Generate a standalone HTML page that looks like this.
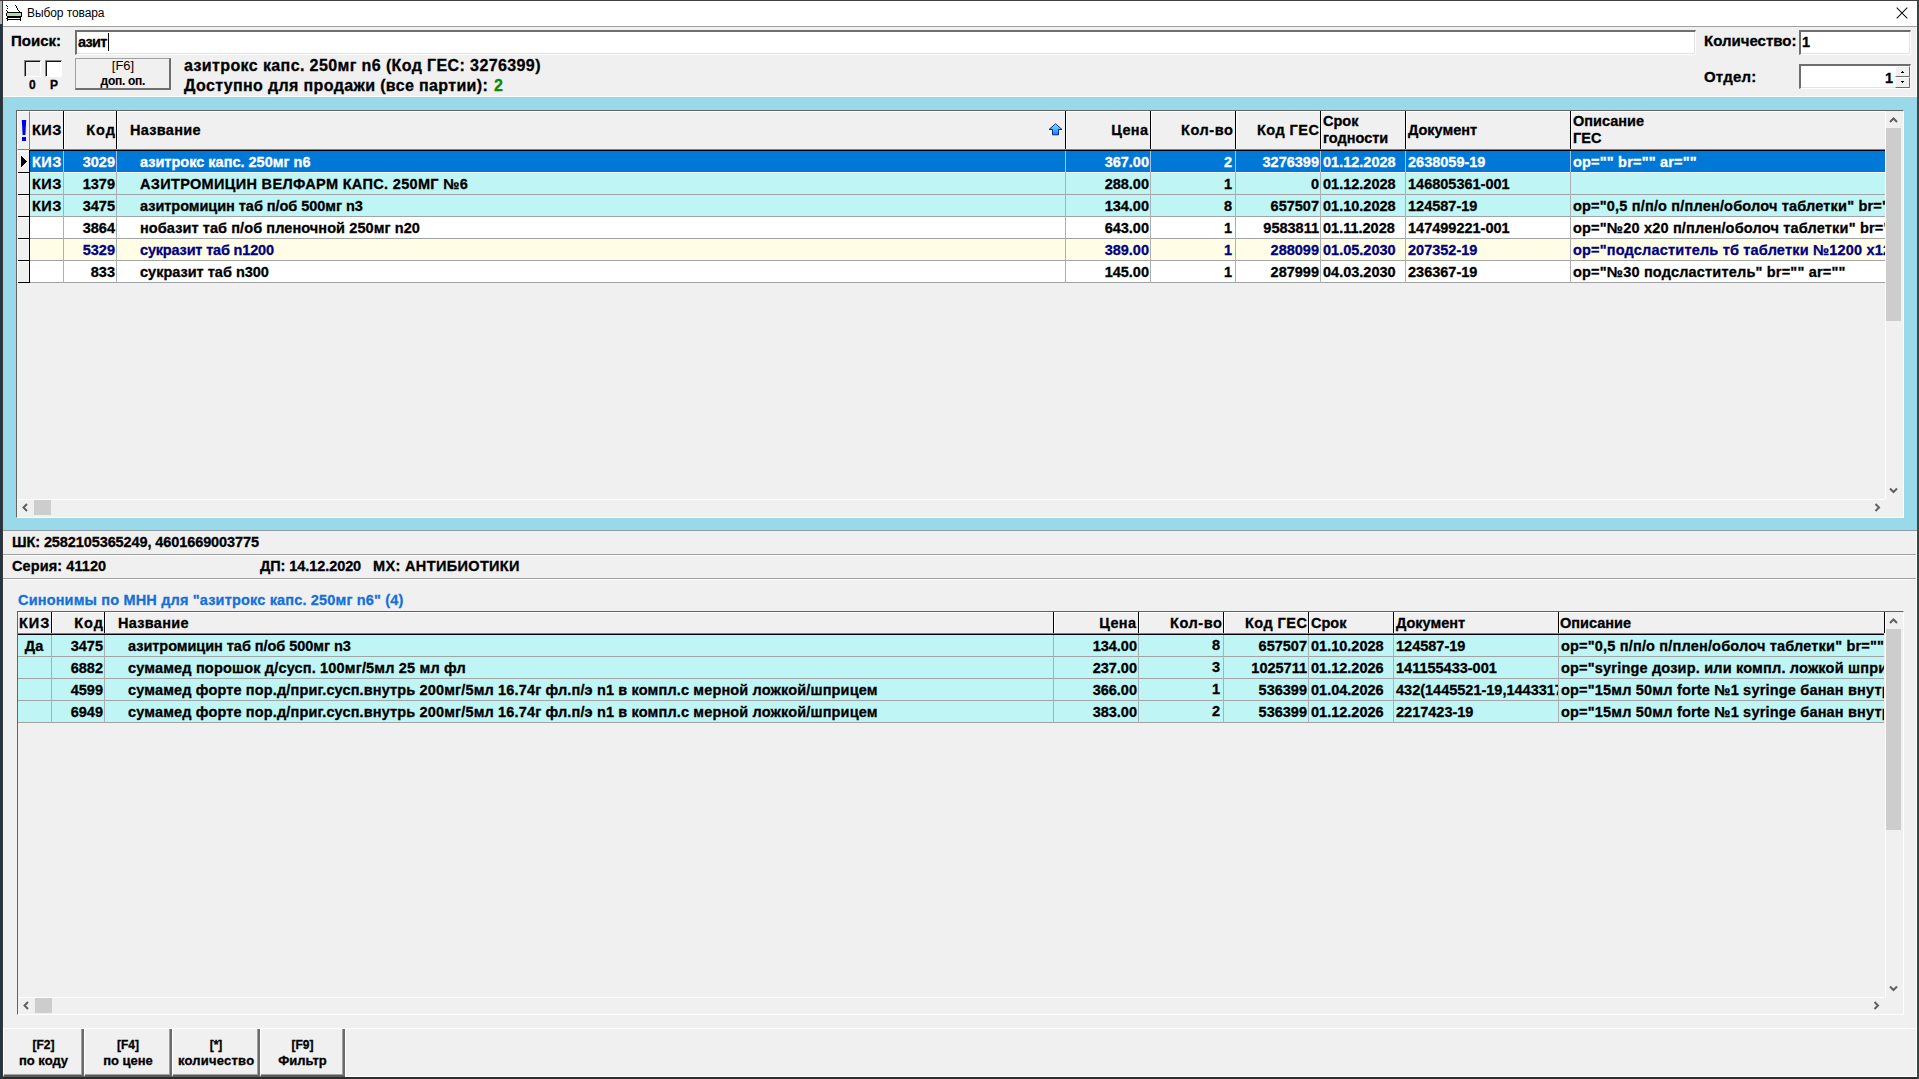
<!DOCTYPE html><html><head><meta charset="utf-8"><style>
*{margin:0;padding:0;box-sizing:border-box}
html,body{width:1919px;height:1079px;overflow:hidden}
body{position:relative;background:#243444;font-family:"Liberation Sans",sans-serif;font-weight:bold}
div{position:absolute}
.t{white-space:pre;-webkit-text-stroke:0.3px currentColor}
.clip{overflow:hidden}
</style></head><body>
<div style="left:0px;top:0px;width:3px;height:24px;background:#b0b0b0;"></div>
<div style="left:0px;top:0px;width:1919px;height:1px;background:#404040;"></div>
<div style="left:2px;top:0px;width:1px;height:1079px;background:#3a3a3a;"></div>
<div style="left:1917px;top:0px;width:2px;height:1079px;background:#3c463f;"></div>
<div style="left:3px;top:1077px;width:1914px;height:2px;background:#2c2c2c;"></div>
<div style="left:3px;top:1px;width:1914px;height:25px;background:#ffffff;"></div>
<div style="left:3px;top:26px;width:1914px;height:1px;background:#a0a0a0;"></div>
<div style="left:3px;top:27px;width:1914px;height:1050px;background:#f0f0f0;"></div>
<div style="left:1916px;top:27px;width:1px;height:1050px;background:#ffffff;"></div>
<div style="left:3px;top:1076px;width:1914px;height:1px;background:#ffffff;"></div>
<svg style="position:absolute;left:5px;top:4px" width="18" height="18" viewBox="0 0 18 18" shape-rendering="crispEdges">
<rect x="2" y="9" width="14" height="3" fill="#c8cec8"/>
<rect x="5" y="10" width="8" height="1" fill="#a8d8a8"/>
<g fill="#000">
<rect x="1" y="1" width="1" height="1"/><rect x="2" y="2" width="1" height="1"/><rect x="2" y="4" width="1" height="1"/><rect x="1" y="6" width="1" height="1"/><rect x="2" y="7" width="1" height="1"/>
<rect x="10" y="1" width="1" height="1"/><rect x="11" y="2" width="1" height="1"/><rect x="11" y="3" width="1" height="1"/><rect x="12" y="4" width="1" height="1"/><rect x="12" y="5" width="1" height="1"/><rect x="13" y="6" width="1" height="1"/><rect x="14" y="7" width="1" height="1"/>
<rect x="2" y="8" width="15" height="1"/><rect x="1" y="9" width="1" height="3"/><rect x="16" y="9" width="1" height="3"/><rect x="2" y="12" width="15" height="1"/>
<rect x="1" y="14" width="2" height="1"/><rect x="3" y="13" width="12" height="1"/><rect x="2" y="13" width="1" height="3"/><rect x="15" y="13" width="1" height="3"/><rect x="3" y="15" width="12" height="1"/><rect x="2" y="16" width="1" height="1"/><rect x="15" y="16" width="1" height="1"/>
</g></svg>
<div class="t" style="top:7px;font-size:12px;line-height:12px;color:#000;font-weight:normal;-webkit-text-stroke:0;letter-spacing:-0.091px;left:27px;">Выбор товара</div>
<svg style="position:absolute;left:1896px;top:7px" width="12" height="12" viewBox="0 0 12 12"><path d="M0.7 0.7L11.3 11.3M11.3 0.7L0.7 11.3" stroke="#111" stroke-width="1.05"/></svg>
<div class="t" style="top:33px;font-size:15px;line-height:15px;color:#000;left:11px;">Поиск:</div>
<div style="left:75px;top:30px;width:1621px;height:25px;background:#fff;border-top:2px solid #6e6e6e;border-left:2px solid #6e6e6e;border-bottom:1px solid #fff;border-right:1px solid #fff;box-shadow:inset -1px -1px 0 #e3e3e3;"></div>
<div class="t" style="top:35px;font-size:14.5px;line-height:14.5px;color:#000;letter-spacing:-0.667px;left:78px;">азит</div>
<div style="left:108px;top:33px;width:1px;height:18px;background:#000;"></div>
<div class="t" style="top:33px;font-size:15px;line-height:15px;color:#000;left:1704px;">Количество:</div>
<div style="left:1799px;top:30px;width:112px;height:25px;background:#fff;border-top:2px solid #6e6e6e;border-left:2px solid #6e6e6e;border-bottom:1px solid #fff;border-right:1px solid #fff;box-shadow:inset -1px -1px 0 #e3e3e3;"></div>
<div class="t" style="top:35px;font-size:14.5px;line-height:14.5px;color:#000;left:1802px;">1</div>
<div class="t" style="top:69px;font-size:15px;line-height:15px;color:#000;letter-spacing:0.2px;left:1704px;">Отдел:</div>
<div style="left:1799px;top:64px;width:112px;height:25px;background:#fff;border-top:2px solid #6e6e6e;border-left:2px solid #6e6e6e;border-bottom:1px solid #fff;border-right:1px solid #fff;box-shadow:inset -1px -1px 0 #e3e3e3;"></div>
<div class="t" style="top:71px;font-size:14.5px;line-height:14.5px;color:#000;left:1293.000px;width:600px;text-align:right;">1</div>
<div style="left:1895px;top:66px;width:15px;height:11px;background:#f0f0f0;border-top:1px solid #fff;border-left:1px solid #fff;border-bottom:1px solid #6e6e6e;border-right:1px solid #6e6e6e;"></div>
<div style="left:1895px;top:77px;width:15px;height:11px;background:#f0f0f0;border-top:1px solid #fff;border-left:1px solid #fff;border-bottom:1px solid #6e6e6e;border-right:1px solid #6e6e6e;"></div>
<svg style="position:absolute;left:1899px;top:69px" width="7" height="16" shape-rendering="crispEdges"><rect x="3" y="2" width="1" height="1" fill="#000"/><rect x="2" y="3" width="3" height="1" fill="#000"/><rect x="2" y="12" width="3" height="1" fill="#000"/><rect x="3" y="13" width="1" height="1" fill="#000"/></svg>
<div style="left:24px;top:60px;width:17px;height:17px;background:#f0f0f0;border-top:1px solid #8a8a8a;border-left:1px solid #8a8a8a;border-bottom:1px solid #fff;border-right:1px solid #fff;box-shadow:inset 1px 1px 0 #141414;"></div>
<div style="left:45px;top:60px;width:17px;height:17px;background:#ffffff;border-top:1px solid #8a8a8a;border-left:1px solid #8a8a8a;border-bottom:1px solid #fff;border-right:1px solid #fff;box-shadow:inset 1px 1px 0 #141414;"></div>
<div class="t" style="top:79px;font-size:12px;line-height:12px;color:#000;left:29px;">0</div>
<div class="t" style="top:79px;font-size:12px;line-height:12px;color:#000;left:50px;">P</div>
<div style="left:75px;top:58px;width:96px;height:32px;background:#f0f0f0;border-top:1px solid #a0a0a0;border-left:1px solid #a0a0a0;border-bottom:2px solid #6e6e6e;border-right:2px solid #6e6e6e;"></div>
<div class="t" style="top:59px;font-size:13px;line-height:13px;color:#000;font-weight:normal;-webkit-text-stroke:0;left:-177.000px;width:600px;text-align:center;">[F6]</div>
<div class="t" style="top:75px;font-size:12px;line-height:12px;color:#000;letter-spacing:-0.286px;left:-177.143px;width:600px;text-align:center;-webkit-text-stroke:0.1px currentColor;">доп. оп.</div>
<div class="t" style="top:58px;font-size:16px;line-height:16px;color:#000;letter-spacing:0.39px;left:184px;">азитрокс капс. 250мг n6 (Код ГЕС: 3276399)</div>
<div class="t" style="top:78px;font-size:16px;line-height:16px;color:#000;letter-spacing:0.364px;left:184px;">Доступно для продажи (все партии):</div>
<div class="t" style="top:78px;font-size:16px;line-height:16px;color:#0a8a0a;left:494px;">2</div>
<div style="left:3px;top:96px;width:1914px;height:1px;background:#ffffff;"></div>
<div style="left:3px;top:97px;width:1914px;height:433px;background:#99d9ea;"></div>
<div style="left:3px;top:530px;width:1914px;height:1px;background:#8c9ca0;"></div>
<div style="left:16px;top:110px;width:1888px;height:408px;background:#f0f0f0;border-top:1px solid #646464;border-left:1px solid #646464;border-bottom:1px solid #fff;border-right:1px solid #fff;"></div>
<div style="left:17px;top:111px;width:1868px;height:39px;background:#f0f0f0;"></div>
<div style="left:17px;top:111px;width:1868px;height:1px;background:#ffffff;"></div>
<div style="left:30px;top:149px;width:1855px;height:1px;background:#808080;"></div>
<div style="left:30px;top:150px;width:1855px;height:1px;background:#00000c;"></div>
<div style="left:30px;top:151px;width:1855px;height:21px;background:#0078d7;"></div>
<div style="left:30px;top:172px;width:1855px;height:1px;background:#f4f8fc;"></div>
<div style="left:30px;top:173px;width:1855px;height:21px;background:#bff5f5;"></div>
<div style="left:30px;top:194px;width:1855px;height:1px;background:#a0a4a4;"></div>
<div style="left:30px;top:195px;width:1855px;height:21px;background:#bff5f5;"></div>
<div style="left:30px;top:216px;width:1855px;height:1px;background:#a0a4a4;"></div>
<div style="left:30px;top:217px;width:1855px;height:21px;background:#ffffff;"></div>
<div style="left:30px;top:238px;width:1855px;height:1px;background:#a0a4a4;"></div>
<div style="left:30px;top:239px;width:1855px;height:21px;background:#fffde6;"></div>
<div style="left:30px;top:260px;width:1855px;height:1px;background:#a0a4a4;"></div>
<div style="left:30px;top:261px;width:1855px;height:21px;background:#ffffff;"></div>
<div style="left:30px;top:282px;width:1855px;height:1px;background:#a0a4a4;"></div>
<div style="left:63px;top:151px;width:1px;height:132px;background:#acb0b0;"></div>
<div style="left:116px;top:151px;width:1px;height:132px;background:#acb0b0;"></div>
<div style="left:1065px;top:151px;width:1px;height:132px;background:#acb0b0;"></div>
<div style="left:1150px;top:151px;width:1px;height:132px;background:#acb0b0;"></div>
<div style="left:1235px;top:151px;width:1px;height:132px;background:#acb0b0;"></div>
<div style="left:1320px;top:151px;width:1px;height:132px;background:#acb0b0;"></div>
<div style="left:1405px;top:151px;width:1px;height:132px;background:#acb0b0;"></div>
<div style="left:1570px;top:151px;width:1px;height:132px;background:#acb0b0;"></div>
<div style="left:63px;top:151px;width:1px;height:21px;background:#9cc8f0;"></div>
<div style="left:116px;top:151px;width:1px;height:21px;background:#9cc8f0;"></div>
<div style="left:1065px;top:151px;width:1px;height:21px;background:#9cc8f0;"></div>
<div style="left:1150px;top:151px;width:1px;height:21px;background:#9cc8f0;"></div>
<div style="left:1235px;top:151px;width:1px;height:21px;background:#9cc8f0;"></div>
<div style="left:1320px;top:151px;width:1px;height:21px;background:#9cc8f0;"></div>
<div style="left:1405px;top:151px;width:1px;height:21px;background:#9cc8f0;"></div>
<div style="left:1570px;top:151px;width:1px;height:21px;background:#9cc8f0;"></div>
<div style="left:63px;top:111px;width:1px;height:38px;background:#000000;"></div>
<div style="left:116px;top:111px;width:1px;height:38px;background:#000000;"></div>
<div style="left:1065px;top:111px;width:1px;height:38px;background:#000000;"></div>
<div style="left:1150px;top:111px;width:1px;height:38px;background:#000000;"></div>
<div style="left:1235px;top:111px;width:1px;height:38px;background:#000000;"></div>
<div style="left:1320px;top:111px;width:1px;height:38px;background:#000000;"></div>
<div style="left:1405px;top:111px;width:1px;height:38px;background:#000000;"></div>
<div style="left:1570px;top:111px;width:1px;height:38px;background:#000000;"></div>
<div style="left:1885px;top:111px;width:1px;height:38px;background:#000000;"></div>
<div style="left:64px;top:112px;width:1px;height:37px;background:#ffffff;"></div>
<div style="left:117px;top:112px;width:1px;height:37px;background:#ffffff;"></div>
<div style="left:1066px;top:112px;width:1px;height:37px;background:#ffffff;"></div>
<div style="left:1151px;top:112px;width:1px;height:37px;background:#ffffff;"></div>
<div style="left:1236px;top:112px;width:1px;height:37px;background:#ffffff;"></div>
<div style="left:1321px;top:112px;width:1px;height:37px;background:#ffffff;"></div>
<div style="left:1406px;top:112px;width:1px;height:37px;background:#ffffff;"></div>
<div style="left:1571px;top:112px;width:1px;height:37px;background:#ffffff;"></div>
<div style="left:17px;top:111px;width:13px;height:39px;background:#f0f0f0;border-top:1px solid #fff;border-left:1px solid #fff;border-right:1px solid #808080;border-bottom:1px solid #808080;"></div>
<div style="left:29px;top:150px;width:1px;height:133px;background:#000;"></div>
<div style="left:17px;top:151px;width:12px;height:21px;background:#f0f0f0;border-top:1px solid #fff;border-left:1px solid #fff;"></div>
<div style="left:18px;top:172px;width:12px;height:1px;background:#000;"></div>
<div style="left:17px;top:173px;width:12px;height:21px;background:#f0f0f0;border-top:1px solid #fff;border-left:1px solid #fff;"></div>
<div style="left:18px;top:194px;width:12px;height:1px;background:#000;"></div>
<div style="left:17px;top:195px;width:12px;height:21px;background:#f0f0f0;border-top:1px solid #fff;border-left:1px solid #fff;"></div>
<div style="left:18px;top:216px;width:12px;height:1px;background:#000;"></div>
<div style="left:17px;top:217px;width:12px;height:21px;background:#f0f0f0;border-top:1px solid #fff;border-left:1px solid #fff;"></div>
<div style="left:18px;top:238px;width:12px;height:1px;background:#000;"></div>
<div style="left:17px;top:239px;width:12px;height:21px;background:#f0f0f0;border-top:1px solid #fff;border-left:1px solid #fff;"></div>
<div style="left:18px;top:260px;width:12px;height:1px;background:#000;"></div>
<div style="left:17px;top:261px;width:12px;height:21px;background:#f0f0f0;border-top:1px solid #fff;border-left:1px solid #fff;"></div>
<div style="left:18px;top:282px;width:12px;height:1px;background:#000;"></div>
<div class="t" style="top:123px;font-size:14.5px;line-height:14.5px;color:#000;letter-spacing:0.5px;left:32px;">КИЗ</div>
<div class="t" style="top:123px;font-size:14.5px;line-height:14.5px;color:#000;letter-spacing:1.0px;left:-484.000px;width:600px;text-align:right;">Код</div>
<div class="t" style="top:123px;font-size:14.5px;line-height:14.5px;color:#000;letter-spacing:0.286px;left:130px;">Название</div>
<div class="t" style="top:123px;font-size:14.5px;line-height:14.5px;color:#000;letter-spacing:0.333px;left:548.333px;width:600px;text-align:right;">Цена</div>
<div class="t" style="top:123px;font-size:14.5px;line-height:14.5px;color:#000;letter-spacing:0.6px;left:633.600px;width:600px;text-align:right;">Кол-во</div>
<div class="t" style="top:123px;font-size:14.5px;line-height:14.5px;color:#000;letter-spacing:0.5px;left:719.500px;width:600px;text-align:right;">Код ГЕС</div>
<div class="t" style="top:114px;font-size:14.5px;line-height:14.5px;color:#000;left:1323px;">Срок</div>
<div class="t" style="top:131px;font-size:14.5px;line-height:14.5px;color:#000;left:1323px;">годности</div>
<div class="t" style="top:123px;font-size:14.5px;line-height:14.5px;color:#000;left:1408px;">Документ</div>
<div class="t" style="top:114px;font-size:14.5px;line-height:14.5px;color:#000;left:1573px;">Описание</div>
<div class="t" style="top:131px;font-size:14.5px;line-height:14.5px;color:#000;left:1573px;">ГЕС</div>
<svg style="position:absolute;left:21px;top:119px" width="6" height="23" shape-rendering="geometricPrecision"><path d="M0.8 1H5.2L4.4 16H1.6z" fill="#0000e6"/><rect x="1" y="18" width="4" height="4" fill="#0000e6"/></svg>
<svg style="position:absolute;left:1048px;top:123px" width="15" height="13" viewBox="0 0 15 13"><defs><linearGradient id="ga" x1="0" y1="0" x2="0" y2="1"><stop offset="0" stop-color="#8fe8ff"/><stop offset="1" stop-color="#0a7ef0"/></linearGradient></defs><path d="M7.5 0.8L14 6.5H10.5V11.8H4.5V6.5H1z" fill="url(#ga)" stroke="#0a2a8a" stroke-width="1"/></svg>
<div class="t" style="top:155px;font-size:14.5px;line-height:14.5px;color:#ffffff;letter-spacing:0.5px;left:32px;">КИЗ</div>
<div class="t" style="top:155px;font-size:14.5px;line-height:14.5px;color:#ffffff;left:-485.000px;width:600px;text-align:right;">3029</div>
<div class="t" style="top:155px;font-size:14.5px;line-height:14.5px;color:#ffffff;left:140px;">азитрокс капс. 250мг n6</div>
<div class="t" style="top:155px;font-size:14.5px;line-height:14.5px;color:#ffffff;left:549.000px;width:600px;text-align:right;">367.00</div>
<div class="t" style="top:155px;font-size:14.5px;line-height:14.5px;color:#ffffff;left:632.000px;width:600px;text-align:right;">2</div>
<div class="t" style="top:155px;font-size:14.5px;line-height:14.5px;color:#ffffff;left:719.000px;width:600px;text-align:right;">3276399</div>
<div class="t" style="top:155px;font-size:14.5px;line-height:14.5px;color:#ffffff;left:1323px;">01.12.2028</div>
<div class="t" style="top:155px;font-size:14.5px;line-height:14.5px;color:#ffffff;left:1408px;">2638059-19</div>
<div class="clip" style="left:1571px;top:151px;width:314px;height:21px">
<div class="t" style="top:4px;font-size:14.5px;line-height:14.5px;color:#ffffff;letter-spacing:0.19px;left:2px;">op="" br="" ar=""</div>
</div>
<div class="t" style="top:177px;font-size:14.5px;line-height:14.5px;color:#000000;letter-spacing:0.5px;left:32px;">КИЗ</div>
<div class="t" style="top:177px;font-size:14.5px;line-height:14.5px;color:#000000;left:-485.000px;width:600px;text-align:right;">1379</div>
<div class="t" style="top:177px;font-size:14.5px;line-height:14.5px;color:#000000;letter-spacing:0.333px;left:140px;">АЗИТРОМИЦИН ВЕЛФАРМ КАПС. 250МГ №6</div>
<div class="t" style="top:177px;font-size:14.5px;line-height:14.5px;color:#000000;left:549.000px;width:600px;text-align:right;">288.00</div>
<div class="t" style="top:177px;font-size:14.5px;line-height:14.5px;color:#000000;left:632.000px;width:600px;text-align:right;">1</div>
<div class="t" style="top:177px;font-size:14.5px;line-height:14.5px;color:#000000;left:719.000px;width:600px;text-align:right;">0</div>
<div class="t" style="top:177px;font-size:14.5px;line-height:14.5px;color:#000000;left:1323px;">01.12.2028</div>
<div class="t" style="top:177px;font-size:14.5px;line-height:14.5px;color:#000000;left:1408px;">146805361-001</div>
<div class="t" style="top:199px;font-size:14.5px;line-height:14.5px;color:#000000;letter-spacing:0.5px;left:32px;">КИЗ</div>
<div class="t" style="top:199px;font-size:14.5px;line-height:14.5px;color:#000000;left:-485.000px;width:600px;text-align:right;">3475</div>
<div class="t" style="top:199px;font-size:14.5px;line-height:14.5px;color:#000000;letter-spacing:-0.036px;left:140px;">азитромицин таб п/об 500мг n3</div>
<div class="t" style="top:199px;font-size:14.5px;line-height:14.5px;color:#000000;left:549.000px;width:600px;text-align:right;">134.00</div>
<div class="t" style="top:199px;font-size:14.5px;line-height:14.5px;color:#000000;left:632.000px;width:600px;text-align:right;">8</div>
<div class="t" style="top:199px;font-size:14.5px;line-height:14.5px;color:#000000;left:719.000px;width:600px;text-align:right;">657507</div>
<div class="t" style="top:199px;font-size:14.5px;line-height:14.5px;color:#000000;left:1323px;">01.10.2028</div>
<div class="t" style="top:199px;font-size:14.5px;line-height:14.5px;color:#000000;left:1408px;">124587-19</div>
<div class="clip" style="left:1571px;top:195px;width:314px;height:21px">
<div class="t" style="top:4px;font-size:14.5px;line-height:14.5px;color:#000000;letter-spacing:0.19px;left:2px;">op="0,5 п/п/о п/плен/оболоч таблетки" br=""</div>
</div>
<div class="t" style="top:221px;font-size:14.5px;line-height:14.5px;color:#000000;left:-485.000px;width:600px;text-align:right;">3864</div>
<div class="t" style="top:221px;font-size:14.5px;line-height:14.5px;color:#000000;letter-spacing:0.086px;left:140px;">нобазит таб п/об пленочной 250мг n20</div>
<div class="t" style="top:221px;font-size:14.5px;line-height:14.5px;color:#000000;left:549.000px;width:600px;text-align:right;">643.00</div>
<div class="t" style="top:221px;font-size:14.5px;line-height:14.5px;color:#000000;left:632.000px;width:600px;text-align:right;">1</div>
<div class="t" style="top:221px;font-size:14.5px;line-height:14.5px;color:#000000;left:719.000px;width:600px;text-align:right;">9583811</div>
<div class="t" style="top:221px;font-size:14.5px;line-height:14.5px;color:#000000;left:1323px;">01.11.2028</div>
<div class="t" style="top:221px;font-size:14.5px;line-height:14.5px;color:#000000;left:1408px;">147499221-001</div>
<div class="clip" style="left:1571px;top:217px;width:314px;height:21px">
<div class="t" style="top:4px;font-size:14.5px;line-height:14.5px;color:#000000;letter-spacing:0.19px;left:2px;">op="№20 x20 п/плен/оболоч таблетки" br=""</div>
</div>
<div class="t" style="top:243px;font-size:14.5px;line-height:14.5px;color:#000080;left:-485.000px;width:600px;text-align:right;">5329</div>
<div class="t" style="top:243px;font-size:14.5px;line-height:14.5px;color:#000080;letter-spacing:-0.176px;left:140px;">сукразит таб n1200</div>
<div class="t" style="top:243px;font-size:14.5px;line-height:14.5px;color:#000080;left:549.000px;width:600px;text-align:right;">389.00</div>
<div class="t" style="top:243px;font-size:14.5px;line-height:14.5px;color:#000080;left:632.000px;width:600px;text-align:right;">1</div>
<div class="t" style="top:243px;font-size:14.5px;line-height:14.5px;color:#000080;left:719.000px;width:600px;text-align:right;">288099</div>
<div class="t" style="top:243px;font-size:14.5px;line-height:14.5px;color:#000080;left:1323px;">01.05.2030</div>
<div class="t" style="top:243px;font-size:14.5px;line-height:14.5px;color:#000080;left:1408px;">207352-19</div>
<div class="clip" style="left:1571px;top:239px;width:314px;height:21px">
<div class="t" style="top:4px;font-size:14.5px;line-height:14.5px;color:#000080;letter-spacing:0.19px;left:2px;">op="подсластитель тб таблетки №1200 x1200"</div>
</div>
<div class="t" style="top:265px;font-size:14.5px;line-height:14.5px;color:#000000;left:-485.000px;width:600px;text-align:right;">833</div>
<div class="t" style="top:265px;font-size:14.5px;line-height:14.5px;color:#000000;left:140px;">сукразит таб n300</div>
<div class="t" style="top:265px;font-size:14.5px;line-height:14.5px;color:#000000;left:549.000px;width:600px;text-align:right;">145.00</div>
<div class="t" style="top:265px;font-size:14.5px;line-height:14.5px;color:#000000;left:632.000px;width:600px;text-align:right;">1</div>
<div class="t" style="top:265px;font-size:14.5px;line-height:14.5px;color:#000000;left:719.000px;width:600px;text-align:right;">287999</div>
<div class="t" style="top:265px;font-size:14.5px;line-height:14.5px;color:#000000;left:1323px;">04.03.2030</div>
<div class="t" style="top:265px;font-size:14.5px;line-height:14.5px;color:#000000;left:1408px;">236367-19</div>
<div class="clip" style="left:1571px;top:261px;width:314px;height:21px">
<div class="t" style="top:4px;font-size:14.5px;line-height:14.5px;color:#000000;letter-spacing:0.19px;left:2px;">op="№30 подсластитель" br="" ar=""</div>
</div>
<svg style="position:absolute;left:20px;top:155px" width="8" height="13" shape-rendering="crispEdges"><path d="M1 0.5L7 6.5L1 12.5z" fill="#000"/></svg>
<div style="left:1885px;top:111px;width:1px;height:388px;background:#ffffff;"></div>
<div style="left:1886px;top:111px;width:16px;height:388px;background:#f0f0f0;"></div>
<div style="left:1886px;top:128px;width:15px;height:193px;background:#cdcdcd;"></div>
<svg style="position:absolute;left:1889px;top:116px" width="9" height="8"><path d="M1 6L4.5 2.5L8 6" fill="none" stroke="#606060" stroke-width="2"/></svg>
<svg style="position:absolute;left:1889px;top:487px" width="9" height="8"><path d="M1 1.5L4.5 5L8 1.5" fill="none" stroke="#606060" stroke-width="2"/></svg>
<div style="left:17px;top:499px;width:1868px;height:1px;background:#ffffff;"></div>
<div style="left:17px;top:500px;width:1868px;height:16px;background:#f0f0f0;"></div>
<div style="left:34px;top:500px;width:17px;height:15px;background:#cdcdcd;"></div>
<svg style="position:absolute;left:21px;top:503px" width="8" height="9"><path d="M6 1L2.5 4.5L6 8" fill="none" stroke="#606060" stroke-width="2"/></svg>
<svg style="position:absolute;left:1874px;top:503px" width="8" height="9"><path d="M1.5 1L5 4.5L1.5 8" fill="none" stroke="#606060" stroke-width="2"/></svg>
<div style="left:1885px;top:499px;width:17px;height:17px;background:#f0f0f0;"></div>
<div class="t" style="top:535px;font-size:14.5px;line-height:14.5px;color:#000;letter-spacing:-0.097px;left:12px;">ШК: 2582105365249, 4601669003775</div>
<div style="left:3px;top:554px;width:1913px;height:1px;background:#a0a0a0;"></div>
<div style="left:3px;top:555px;width:1913px;height:1px;background:#ffffff;"></div>
<div class="t" style="top:559px;font-size:14.5px;line-height:14.5px;color:#000;letter-spacing:0.091px;left:12px;">Серия: 41120</div>
<div class="t" style="top:559px;font-size:14.5px;line-height:14.5px;color:#000;letter-spacing:-0.077px;left:260px;">ДП: 14.12.2020</div>
<div class="t" style="top:559px;font-size:14.5px;line-height:14.5px;color:#000;letter-spacing:0.357px;left:373px;">МХ: АНТИБИОТИКИ</div>
<div style="left:3px;top:578px;width:1913px;height:1px;background:#a0a0a0;"></div>
<div style="left:3px;top:579px;width:1913px;height:1px;background:#ffffff;"></div>
<div class="t" style="top:593px;font-size:14.5px;line-height:14.5px;color:#1670d8;letter-spacing:0.167px;left:18px;">Синонимы по МНН для "азитрокс капс. 250мг n6" (4)</div>
<div style="left:17px;top:611px;width:1887px;height:404px;background:#f0f0f0;border-top:1px solid #646464;border-left:1px solid #646464;border-bottom:1px solid #fff;border-right:1px solid #fff;"></div>
<div style="left:18px;top:612px;width:1866px;height:22px;background:#f0f0f0;"></div>
<div style="left:18px;top:612px;width:1866px;height:1px;background:#ffffff;"></div>
<div style="left:18px;top:633px;width:1866px;height:1px;background:#808080;"></div>
<div style="left:18px;top:634px;width:1866px;height:1px;background:#00000c;"></div>
<div style="left:18px;top:635px;width:1866px;height:21px;background:#bff5f5;"></div>
<div style="left:18px;top:656px;width:1866px;height:1px;background:#a0a4a4;"></div>
<div style="left:18px;top:657px;width:1866px;height:21px;background:#bff5f5;"></div>
<div style="left:18px;top:678px;width:1866px;height:1px;background:#a0a4a4;"></div>
<div style="left:18px;top:679px;width:1866px;height:21px;background:#bff5f5;"></div>
<div style="left:18px;top:700px;width:1866px;height:1px;background:#a0a4a4;"></div>
<div style="left:18px;top:701px;width:1866px;height:21px;background:#bff5f5;"></div>
<div style="left:18px;top:722px;width:1866px;height:1px;background:#a0a4a4;"></div>
<div style="left:51px;top:635px;width:1px;height:88px;background:#acb0b0;"></div>
<div style="left:104px;top:635px;width:1px;height:88px;background:#acb0b0;"></div>
<div style="left:1053px;top:635px;width:1px;height:88px;background:#acb0b0;"></div>
<div style="left:1138px;top:635px;width:1px;height:88px;background:#acb0b0;"></div>
<div style="left:1223px;top:635px;width:1px;height:88px;background:#acb0b0;"></div>
<div style="left:1308px;top:635px;width:1px;height:88px;background:#acb0b0;"></div>
<div style="left:1393px;top:635px;width:1px;height:88px;background:#acb0b0;"></div>
<div style="left:1558px;top:635px;width:1px;height:88px;background:#acb0b0;"></div>
<div style="left:51px;top:612px;width:1px;height:21px;background:#000000;"></div>
<div style="left:104px;top:612px;width:1px;height:21px;background:#000000;"></div>
<div style="left:1053px;top:612px;width:1px;height:21px;background:#000000;"></div>
<div style="left:1138px;top:612px;width:1px;height:21px;background:#000000;"></div>
<div style="left:1223px;top:612px;width:1px;height:21px;background:#000000;"></div>
<div style="left:1308px;top:612px;width:1px;height:21px;background:#000000;"></div>
<div style="left:1393px;top:612px;width:1px;height:21px;background:#000000;"></div>
<div style="left:1558px;top:612px;width:1px;height:21px;background:#000000;"></div>
<div style="left:1884px;top:612px;width:1px;height:21px;background:#000000;"></div>
<div style="left:52px;top:613px;width:1px;height:20px;background:#ffffff;"></div>
<div style="left:105px;top:613px;width:1px;height:20px;background:#ffffff;"></div>
<div style="left:1054px;top:613px;width:1px;height:20px;background:#ffffff;"></div>
<div style="left:1139px;top:613px;width:1px;height:20px;background:#ffffff;"></div>
<div style="left:1224px;top:613px;width:1px;height:20px;background:#ffffff;"></div>
<div style="left:1309px;top:613px;width:1px;height:20px;background:#ffffff;"></div>
<div style="left:1394px;top:613px;width:1px;height:20px;background:#ffffff;"></div>
<div style="left:1559px;top:613px;width:1px;height:20px;background:#ffffff;"></div>
<div class="t" style="top:616px;font-size:14.5px;line-height:14.5px;color:#000;letter-spacing:1.0px;left:19px;">КИЗ</div>
<div class="t" style="top:616px;font-size:14.5px;line-height:14.5px;color:#000;letter-spacing:1.0px;left:-496.000px;width:600px;text-align:right;">Код</div>
<div class="t" style="top:616px;font-size:14.5px;line-height:14.5px;color:#000;letter-spacing:0.286px;left:118px;">Название</div>
<div class="t" style="top:616px;font-size:14.5px;line-height:14.5px;color:#000;letter-spacing:0.333px;left:536.333px;width:600px;text-align:right;">Цена</div>
<div class="t" style="top:616px;font-size:14.5px;line-height:14.5px;color:#000;letter-spacing:0.6px;left:622.600px;width:600px;text-align:right;">Кол-во</div>
<div class="t" style="top:616px;font-size:14.5px;line-height:14.5px;color:#000;letter-spacing:0.5px;left:707.500px;width:600px;text-align:right;">Код ГЕС</div>
<div class="t" style="top:616px;font-size:14.5px;line-height:14.5px;color:#000;left:1311px;">Срок</div>
<div class="t" style="top:616px;font-size:14.5px;line-height:14.5px;color:#000;left:1396px;">Документ</div>
<div class="t" style="top:616px;font-size:14.5px;line-height:14.5px;color:#000;left:1560px;">Описание</div>
<div class="t" style="top:639px;font-size:14.5px;line-height:14.5px;color:#000;left:-266.000px;width:600px;text-align:center;">Да</div>
<div class="t" style="top:639px;font-size:14.5px;line-height:14.5px;color:#000;left:-497.000px;width:600px;text-align:right;">3475</div>
<div class="t" style="top:639px;font-size:14.5px;line-height:14.5px;color:#000;letter-spacing:-0.036px;left:128px;">азитромицин таб п/об 500мг n3</div>
<div class="t" style="top:639px;font-size:14.5px;line-height:14.5px;color:#000;left:537.000px;width:600px;text-align:right;">134.00</div>
<div class="t" style="top:638px;font-size:14.5px;line-height:14.5px;color:#000;left:620.000px;width:600px;text-align:right;">8</div>
<div class="t" style="top:639px;font-size:14.5px;line-height:14.5px;color:#000;left:707.000px;width:600px;text-align:right;">657507</div>
<div class="t" style="top:639px;font-size:14.5px;line-height:14.5px;color:#000;left:1311px;">01.10.2028</div>
<div class="clip" style="left:1394px;top:635px;width:164px;height:21px">
<div class="t" style="top:4px;font-size:14.5px;line-height:14.5px;color:#000;left:2px;">124587-19</div>
</div>
<div class="clip" style="left:1559px;top:635px;width:325px;height:21px">
<div class="t" style="top:4px;font-size:14.5px;line-height:14.5px;color:#000;letter-spacing:0.19px;left:2px;">op="0,5 п/п/о п/плен/оболоч таблетки" br=""</div>
</div>
<div class="t" style="top:661px;font-size:14.5px;line-height:14.5px;color:#000;left:-497.000px;width:600px;text-align:right;">6882</div>
<div class="t" style="top:661px;font-size:14.5px;line-height:14.5px;color:#000;letter-spacing:0.171px;left:128px;">сумамед порошок д/сусп. 100мг/5мл 25 мл фл</div>
<div class="t" style="top:661px;font-size:14.5px;line-height:14.5px;color:#000;left:537.000px;width:600px;text-align:right;">237.00</div>
<div class="t" style="top:660px;font-size:14.5px;line-height:14.5px;color:#000;left:620.000px;width:600px;text-align:right;">3</div>
<div class="t" style="top:661px;font-size:14.5px;line-height:14.5px;color:#000;left:707.000px;width:600px;text-align:right;">1025711</div>
<div class="t" style="top:661px;font-size:14.5px;line-height:14.5px;color:#000;left:1311px;">01.12.2026</div>
<div class="clip" style="left:1394px;top:657px;width:164px;height:21px">
<div class="t" style="top:4px;font-size:14.5px;line-height:14.5px;color:#000;left:2px;">141155433-001</div>
</div>
<div class="clip" style="left:1559px;top:657px;width:325px;height:21px">
<div class="t" style="top:4px;font-size:14.5px;line-height:14.5px;color:#000;letter-spacing:0.19px;left:2px;">op="syringe дозир. или компл. ложкой шприцем"</div>
</div>
<div class="t" style="top:683px;font-size:14.5px;line-height:14.5px;color:#000;left:-497.000px;width:600px;text-align:right;">4599</div>
<div class="t" style="top:683px;font-size:14.5px;line-height:14.5px;color:#000;letter-spacing:0.149px;left:128px;">сумамед форте пор.д/приг.сусп.внутрь 200мг/5мл 16.74г фл.п/э n1 в компл.с мерной ложкой/шприцем</div>
<div class="t" style="top:683px;font-size:14.5px;line-height:14.5px;color:#000;left:537.000px;width:600px;text-align:right;">366.00</div>
<div class="t" style="top:682px;font-size:14.5px;line-height:14.5px;color:#000;left:620.000px;width:600px;text-align:right;">1</div>
<div class="t" style="top:683px;font-size:14.5px;line-height:14.5px;color:#000;left:707.000px;width:600px;text-align:right;">536399</div>
<div class="t" style="top:683px;font-size:14.5px;line-height:14.5px;color:#000;left:1311px;">01.04.2026</div>
<div class="clip" style="left:1394px;top:679px;width:164px;height:21px">
<div class="t" style="top:4px;font-size:14.5px;line-height:14.5px;color:#000;left:2px;">432(1445521-19,1443317-19)</div>
</div>
<div class="clip" style="left:1559px;top:679px;width:325px;height:21px">
<div class="t" style="top:4px;font-size:14.5px;line-height:14.5px;color:#000;letter-spacing:0.19px;left:2px;">op="15мл 50мл forte №1 syringe банан внутрь"</div>
</div>
<div class="t" style="top:705px;font-size:14.5px;line-height:14.5px;color:#000;left:-497.000px;width:600px;text-align:right;">6949</div>
<div class="t" style="top:705px;font-size:14.5px;line-height:14.5px;color:#000;letter-spacing:0.149px;left:128px;">сумамед форте пор.д/приг.сусп.внутрь 200мг/5мл 16.74г фл.п/э n1 в компл.с мерной ложкой/шприцем</div>
<div class="t" style="top:705px;font-size:14.5px;line-height:14.5px;color:#000;left:537.000px;width:600px;text-align:right;">383.00</div>
<div class="t" style="top:704px;font-size:14.5px;line-height:14.5px;color:#000;left:620.000px;width:600px;text-align:right;">2</div>
<div class="t" style="top:705px;font-size:14.5px;line-height:14.5px;color:#000;left:707.000px;width:600px;text-align:right;">536399</div>
<div class="t" style="top:705px;font-size:14.5px;line-height:14.5px;color:#000;left:1311px;">01.12.2026</div>
<div class="clip" style="left:1394px;top:701px;width:164px;height:21px">
<div class="t" style="top:4px;font-size:14.5px;line-height:14.5px;color:#000;left:2px;">2217423-19</div>
</div>
<div class="clip" style="left:1559px;top:701px;width:325px;height:21px">
<div class="t" style="top:4px;font-size:14.5px;line-height:14.5px;color:#000;letter-spacing:0.19px;left:2px;">op="15мл 50мл forte №1 syringe банан внутрь"</div>
</div>
<div style="left:1885px;top:612px;width:1px;height:385px;background:#ffffff;"></div>
<div style="left:1886px;top:612px;width:16px;height:385px;background:#f0f0f0;"></div>
<div style="left:1886px;top:629px;width:15px;height:201px;background:#cdcdcd;"></div>
<svg style="position:absolute;left:1889px;top:617px" width="9" height="8"><path d="M1 6L4.5 2.5L8 6" fill="none" stroke="#606060" stroke-width="2"/></svg>
<svg style="position:absolute;left:1889px;top:985px" width="9" height="8"><path d="M1 1.5L4.5 5L8 1.5" fill="none" stroke="#606060" stroke-width="2"/></svg>
<div style="left:18px;top:997px;width:1866px;height:1px;background:#ffffff;"></div>
<div style="left:18px;top:998px;width:1866px;height:16px;background:#f0f0f0;"></div>
<div style="left:35px;top:998px;width:17px;height:15px;background:#cdcdcd;"></div>
<svg style="position:absolute;left:22px;top:1001px" width="8" height="9"><path d="M6 1L2.5 4.5L6 8" fill="none" stroke="#606060" stroke-width="2"/></svg>
<svg style="position:absolute;left:1873px;top:1001px" width="8" height="9"><path d="M1.5 1L5 4.5L1.5 8" fill="none" stroke="#606060" stroke-width="2"/></svg>
<div style="left:1885px;top:997px;width:17px;height:17px;background:#f0f0f0;"></div>
<div style="left:3px;top:1028px;width:1913px;height:1px;background:#ffffff;"></div>
<div style="left:3px;top:1029px;width:81px;height:48px;background:#f0f0f0;border-left:1px solid #fff;border-bottom:2px solid #5a5a5a;border-right:2px solid #6a6a6a;box-shadow:inset -1px -1px 0 #a0a0a0;"></div>
<div class="t" style="top:1039px;font-size:12px;line-height:12px;color:#000;left:-256.500px;width:600px;text-align:center;">[F2]</div>
<div class="t" style="top:1054px;font-size:13px;line-height:13px;color:#000;left:-256.500px;width:600px;text-align:center;">по коду</div>
<div style="left:84px;top:1029px;width:88px;height:48px;background:#f0f0f0;border-left:1px solid #fff;border-bottom:2px solid #5a5a5a;border-right:2px solid #6a6a6a;box-shadow:inset -1px -1px 0 #a0a0a0;"></div>
<div class="t" style="top:1039px;font-size:12px;line-height:12px;color:#000;left:-172.000px;width:600px;text-align:center;">[F4]</div>
<div class="t" style="top:1054px;font-size:13px;line-height:13px;color:#000;left:-172.000px;width:600px;text-align:center;">по цене</div>
<div style="left:172px;top:1029px;width:88px;height:48px;background:#f0f0f0;border-left:1px solid #fff;border-bottom:2px solid #5a5a5a;border-right:2px solid #6a6a6a;box-shadow:inset -1px -1px 0 #a0a0a0;"></div>
<div class="t" style="top:1039px;font-size:12px;line-height:12px;color:#000;left:-84.000px;width:600px;text-align:center;">[*]</div>
<div class="t" style="top:1054px;font-size:13px;line-height:13px;color:#000;letter-spacing:0.222px;left:-83.889px;width:600px;text-align:center;">количество</div>
<div style="left:260px;top:1029px;width:85px;height:48px;background:#f0f0f0;border-left:1px solid #fff;border-bottom:2px solid #5a5a5a;border-right:2px solid #6a6a6a;box-shadow:inset -1px -1px 0 #a0a0a0;"></div>
<div class="t" style="top:1039px;font-size:12px;line-height:12px;color:#000;left:2.500px;width:600px;text-align:center;">[F9]</div>
<div class="t" style="top:1054px;font-size:13px;line-height:13px;color:#000;left:2.500px;width:600px;text-align:center;">Фильтр</div>
<div style="left:345px;top:1029px;width:1px;height:47px;background:#ffffff;"></div>
</body></html>
